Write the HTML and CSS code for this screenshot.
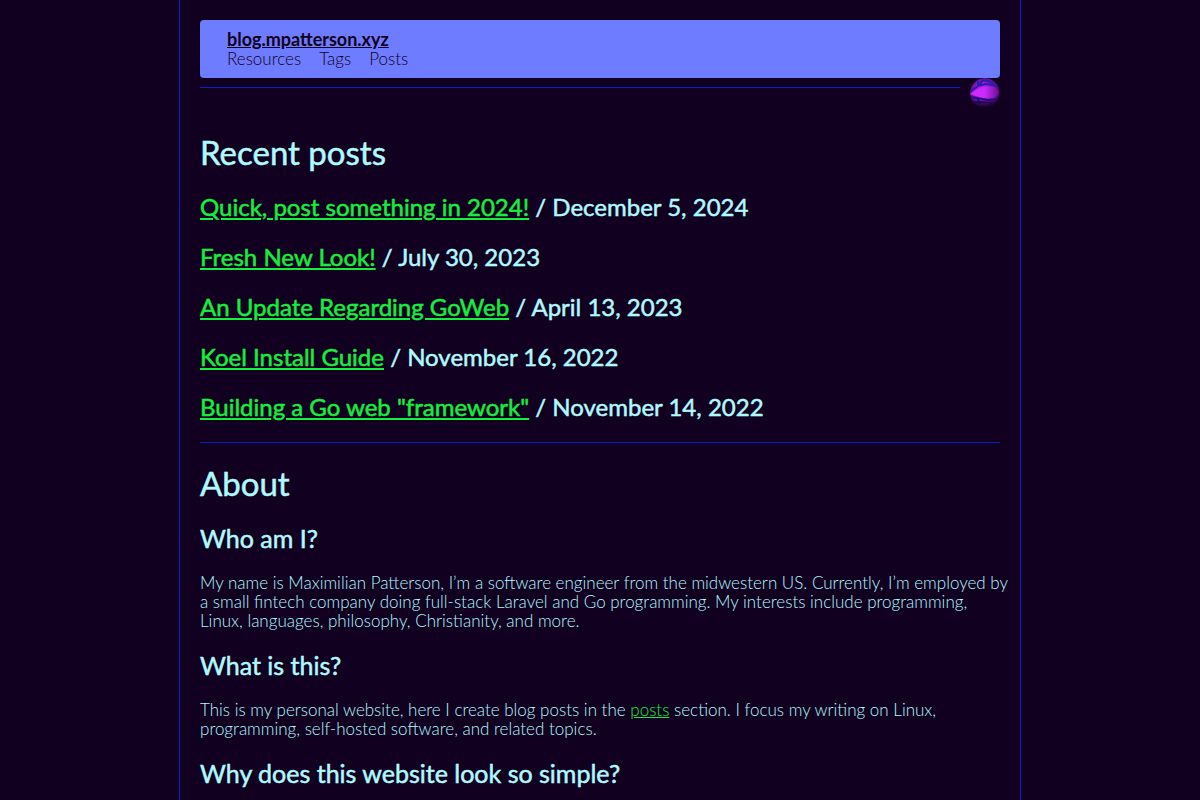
FILE: index.html
```html
<!DOCTYPE html>
<html lang="en">
<head>
<meta charset="utf-8">
<meta name="viewport" content="width=device-width, initial-scale=1">
<title>blog.mpatterson.xyz</title>
<link rel="stylesheet" href="styles.css">
</head>
<body>
<div class="page">
  <header class="site-header">
    <a class="site-title" href="/">blog.mpatterson.xyz</a>
    <nav class="site-nav">
      <a href="/resources">Resources</a>
      <a href="/tags">Tags</a>
      <a href="/posts">Posts</a>
    </nav>
  </header>
  <div class="divider">
    <hr class="rule divider-rule">
    <svg class="orb" viewBox="0 0 32 32" aria-hidden="true">
      <defs>
        <radialGradient id="glow" cx="0.46" cy="0.45" r="0.54">
          <stop offset="0" stop-color="#d52bfa"/>
          <stop offset="0.5" stop-color="#a51bd8"/>
          <stop offset="0.8" stop-color="#6a0f98"/>
          <stop offset="1" stop-color="#2a0640"/>
        </radialGradient>
        <linearGradient id="band" x1="0" y1="0" x2="1" y2="0">
          <stop offset="0.5" stop-color="#cc2bfa"/>
          <stop offset="1" stop-color="#6a1098"/>
        </linearGradient>
        <linearGradient id="fade" x1="0" y1="0" x2="0" y2="1">
          <stop offset="0.6" stop-color="#120020" stop-opacity="0"/>
          <stop offset="0.95" stop-color="#120020" stop-opacity="0.9"/>
        </linearGradient>
        <clipPath id="ball"><circle cx="17" cy="15" r="15"/></clipPath>
      </defs>
      <g clip-path="url(#ball)">
        <circle cx="17" cy="15" r="15" fill="url(#glow)"/>
        <path d="M2 16 Q9 10 18 9 Q27 8 31 14 Q28 21 19 21 Q9 19 2 16 Z" fill="url(#band)"/>
        <path d="M3 13 L10 8 L15 2 M9 8 L18 6 L28 8 M14 2 L20 3 L26 6 M10 3 L10 8" fill="none" stroke="#2a1cae" stroke-width="2"/>
        <path d="M2 19 L9 20 L20 22 L29 21 M6 24 L13 24 L25 25 M9 19 L12 26" fill="none" stroke="#28108f" stroke-width="2"/>
        <rect width="32" height="32" fill="url(#fade)"/>
      </g>
    </svg>
  </div>
  <main>
    <section class="posts">
      <h1>Recent posts</h1>
      <h2><a href="/posts/quick">Quick, post something in 2024!</a> / December 5, 2024</h2>
      <h2><a href="/posts/fresh">Fresh New Look!</a> / July 30, 2023</h2>
      <h2><a href="/posts/goweb">An Update Regarding GoWeb</a> / April 13, 2023</h2>
      <h2><a href="/posts/koel">Koel Install Guide</a> / November 16, 2022</h2>
      <h2><a href="/posts/framework">Building a Go web "framework"</a> / November 14, 2022</h2>
    </section>
    <hr class="rule">
    <section>
      <h1>About</h1>
      <h2>Who am I?</h2>
      <p>My name is Maximilian Patterson, I’m a software engineer from the midwestern US. Currently, I’m employed by a small fintech company doing full-stack Laravel and Go programming. My interests include programming, Linux, languages, philosophy, Christianity, and more.</p>
      <h2>What is this?</h2>
      <p>This is my personal website, here I create blog posts in the <a href="/posts">posts</a> section. I focus my writing on Linux, programming, self-hosted software, and related topics.</p>
      <h2>Why does this website look so simple?</h2>
    </section>
  </main>
</div>
</body>
</html>
```

FILE: styles.css
```css
html {
  background: #120020;
}

body {
  margin: 0;
  color: #affaff;
  font-family: Lato, "Liberation Sans", sans-serif;
  font-size: 17px;
  font-weight: 300;
  line-height: 19px;
}

.page {
  box-sizing: border-box;
  max-width: 842px;
  min-height: 100vh;
  margin: 0 auto;
  padding: 20px;
  border: solid #0a1ec8;
  border-width: 0 1px;
}

.site-header {
  display: flex;
  flex-direction: column;
  align-items: flex-start;
  padding: 9px 27px;
  border-radius: 4px;
  background: #6e7cff;
  line-height: 20px;
}

.site-header a {
  color: #120020;
}

.site-title {
  font-size: 18px;
  font-weight: 700;
}

.site-nav {
  display: flex;
  gap: 18px;
}

.site-nav a {
  text-decoration: none;
}

.rule {
  height: 1px;
  margin: 20px 0;
  border: 0;
  background: #0a1ec8;
}

.divider {
  display: flex;
  align-items: flex-start;
  gap: 8px;
  padding-bottom: 2px;
}

.divider-rule {
  flex: 1;
  margin: 9px 0 0;
}

.orb {
  width: 32px;
  height: 32px;
}

h1,
h2 {
  margin: 20px 0;
  font-weight: 400;
  -webkit-text-stroke: 0.5px currentColor;
}

h1 {
  font-size: 33px;
  line-height: 40px;
}

h2 {
  font-size: 25px;
  line-height: 30px;
}

.posts h2 {
  font-size: 24px;
}

h1 + h2 {
  margin-top: 0;
}

p {
  margin: 20px -10px 20px 0;
}

main a {
  color: #14f03c;
}
```
